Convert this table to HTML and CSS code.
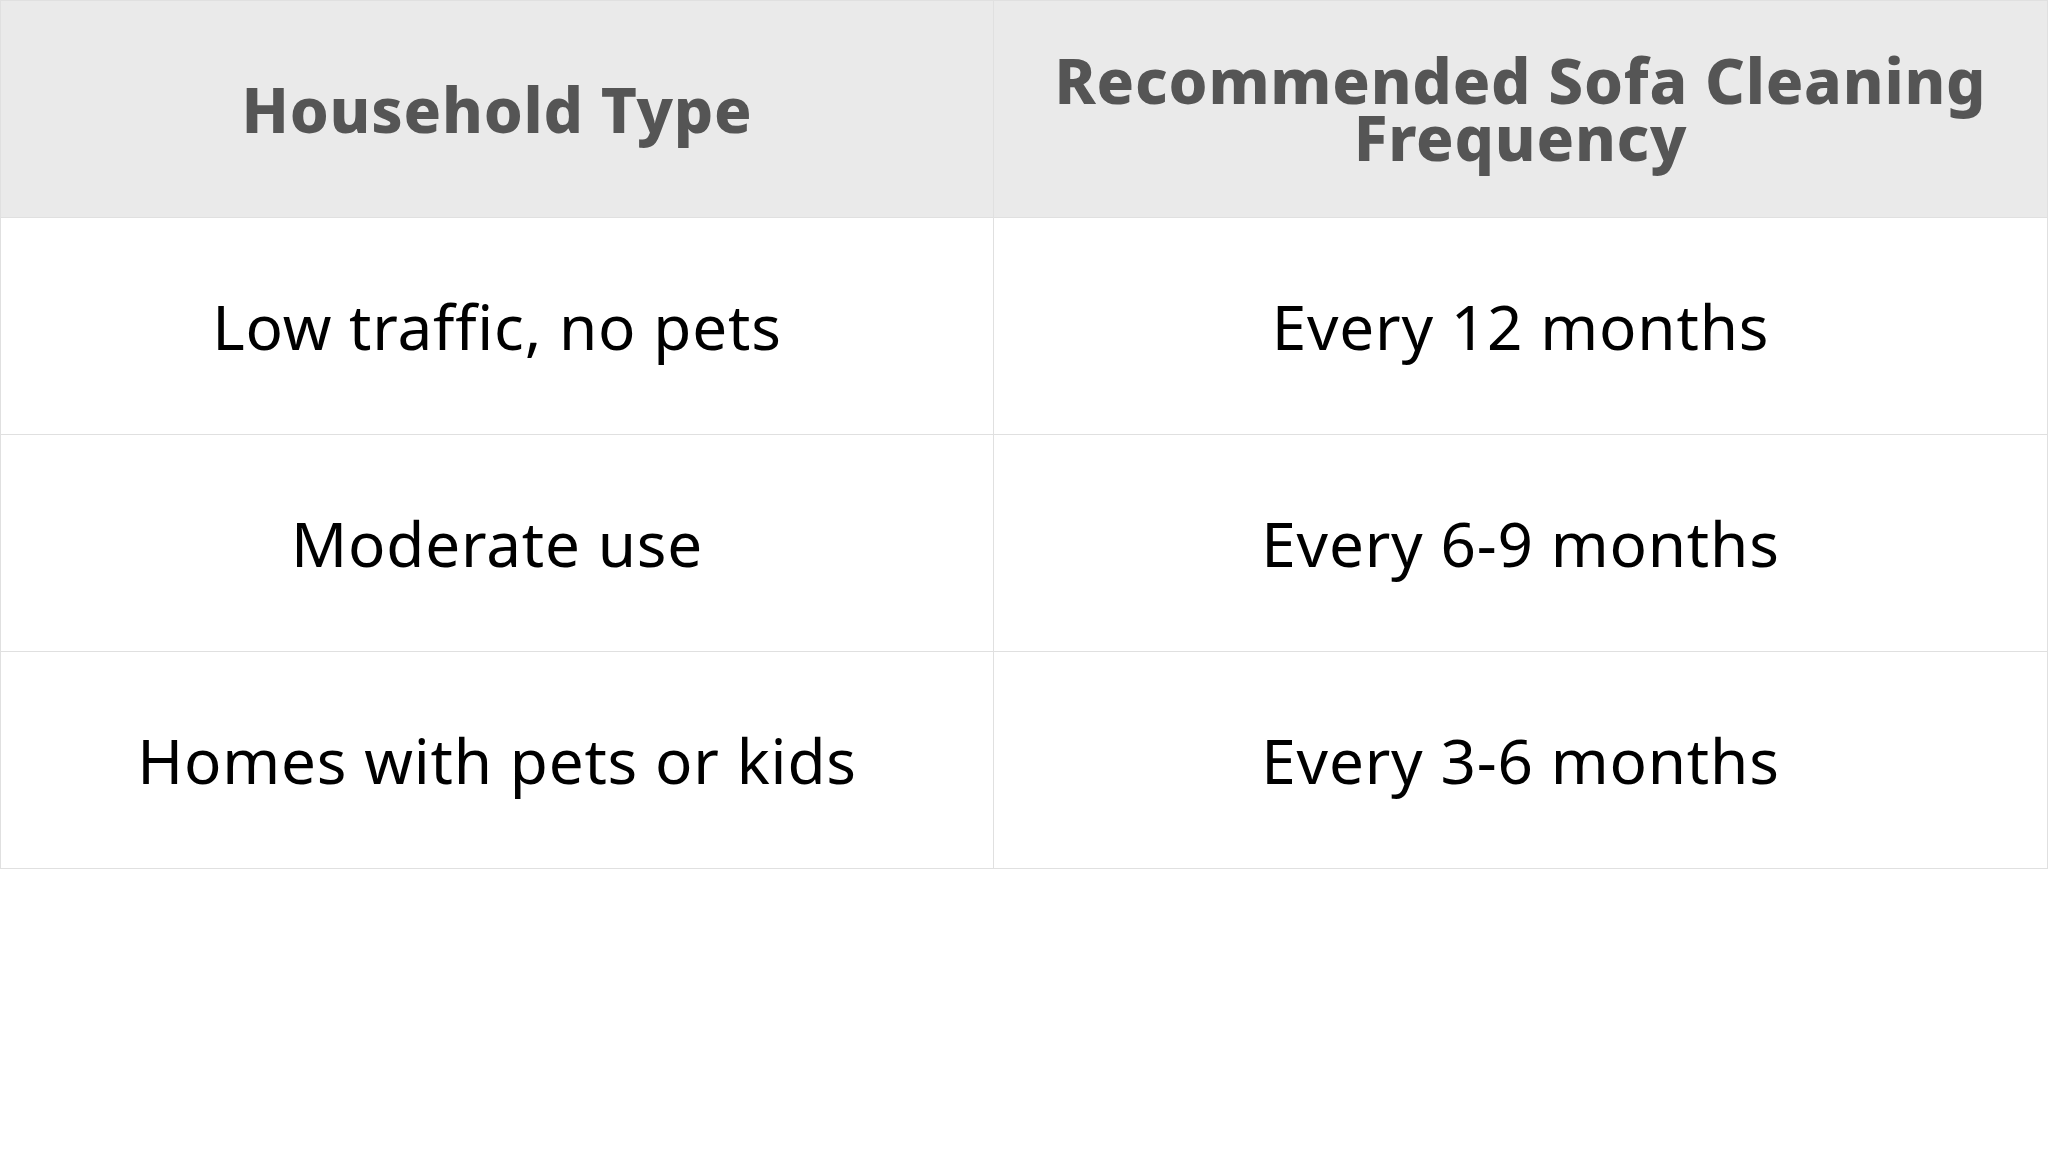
FILE: index.html
```html
<!DOCTYPE html>
<html lang="en">
<head>
<meta charset="utf-8">
<title>Sofa Cleaning Frequency</title>
<link rel="stylesheet" href="styles.css">
</head>
<body>
<table class="freq-table">
  <colgroup>
    <col class="col-type">
    <col class="col-freq">
  </colgroup>
  <thead>
    <tr>
      <th>Household Type</th>
      <th>Recommended Sofa Cleaning Frequency</th>
    </tr>
  </thead>
  <tbody>
    <tr>
      <td>Low traffic, no pets</td>
      <td>Every 12 months</td>
    </tr>
    <tr>
      <td>Moderate use</td>
      <td>Every 6-9 months</td>
    </tr>
    <tr>
      <td>Homes with pets or kids</td>
      <td>Every 3-6 months</td>
    </tr>
  </tbody>
</table>
</body>
</html>
```
FILE: styles.css
```css
html, body {
  margin: 0;
  padding: 0;
  background: #ffffff;
}

body {
  font-family: "Noto Sans", "Open Sans", sans-serif;
}

.freq-table {
  width: 2048px;
  border-collapse: collapse;
  table-layout: fixed;
}

.col-type {
  width: 993px;
}

.freq-table th,
.freq-table td {
  border: 1px solid #e0e0e0;
  text-align: center;
  vertical-align: middle;
  height: 217px;
  padding: 0 50px;
  box-sizing: border-box;
}

.freq-table th {
  background: #eaeaea;
  color: #555555;
  font-weight: 800;
  font-size: 62px;
  line-height: 57px;
  letter-spacing: 0.8px;
}

.freq-table td {
  color: #000000;
  font-weight: 400;
  font-size: 62px;
  line-height: 70px;
  letter-spacing: 0.8px;
}
```
